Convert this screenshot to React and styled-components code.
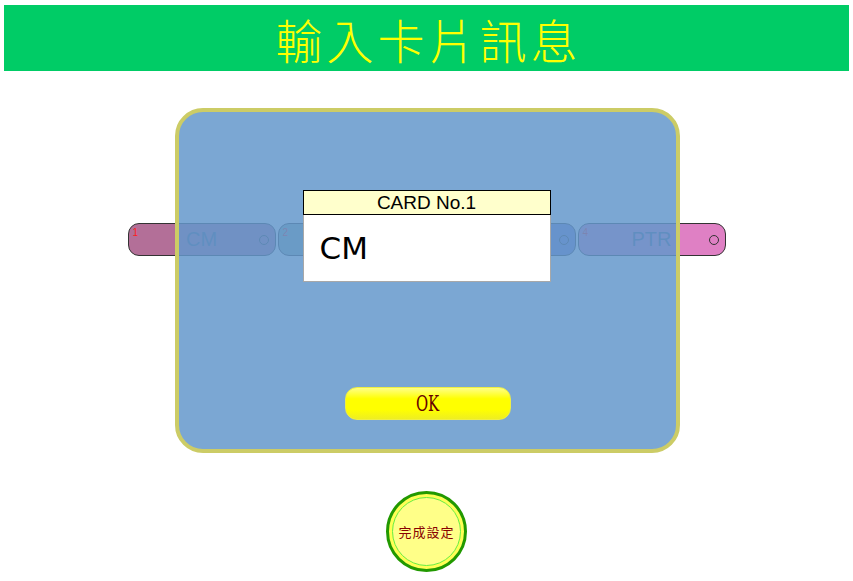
import React from "react";
import styled, { createGlobalStyle } from "styled-components";

const Global = createGlobalStyle`
  html, body { margin: 0; padding: 0; background: #ffffff; }
  body { font-family: "Liberation Sans", Arial, sans-serif; }
`;

const Page = styled.div`
  width: 853px;
  height: 581px;
  overflow: hidden;
  display: flex;
  flex-direction: column;
  align-items: center;
`;

const TitleBar = styled.header`
  margin: 5px 4px 0 4px;
  align-self: stretch;
  height: 66px;
  background: #00cc66;
  display: flex;
  align-items: center;
  justify-content: center;
  color: #ffff00;
  font-family: "Noto Sans CJK TC", "Noto Sans CJK SC", sans-serif;
  font-weight: 300;
  font-size: 47px;
  letter-spacing: 4px;
  line-height: 1;
  padding-left: 4px;
`;

const Stage = styled.div`
  position: relative;
  align-self: stretch;
  height: 420px;
  display: flex;
  flex-direction: column;
  align-items: center;
`;

const PillRow = styled.div`
  margin-top: 152px;
  display: flex;
  gap: 2px;
`;

const Pill = styled.div`
  position: relative;
  width: 146px;
  height: 31px;
  border: 1px solid #333;
  border-radius: 11px;
  background: ${(p) => p.$bg};
  display: flex;
  align-items: center;
  justify-content: center;
  box-sizing: content-box;
`;

const PillNum = styled.span`
  position: absolute;
  left: 4px;
  top: 3px;
  font-size: 10px;
  color: #ff2020;
  font-family: "Liberation Sans", sans-serif;
`;

const PillText = styled.span`
  font-size: 20px;
  color: #4a5a80;
  font-family: "Liberation Sans", Arial, sans-serif;
`;

const PillDot = styled.span`
  position: absolute;
  right: 6px;
  top: 11px;
  width: 8px;
  height: 8px;
  border: 1px solid #333;
  border-radius: 50%;
`;

const Modal = styled.div`
  position: absolute;
  top: 37px;
  left: 175px;
  width: 497px;
  height: 337px;
  border: 4px solid #cccc66;
  border-radius: 28px;
  background: rgba(100, 152, 203, 0.85);
  display: flex;
  flex-direction: column;
  align-items: center;
`;

const Card = styled.div`
  margin-top: 78px;
  width: 248px;
  margin-left: -2px;
  display: flex;
  flex-direction: column;
`;

const CardHead = styled.div`
  height: 23px;
  background: #ffffcc;
  border: 1px solid #000;
  display: flex;
  align-items: center;
  justify-content: center;
  font-size: 19px;
  color: #000;
  font-family: "Liberation Sans", Arial, sans-serif;
`;

const CardBody = styled.div`
  height: 66px;
  background: #ffffff;
  border: 1px solid #a8a8a8;
  border-top: none;
  display: flex;
  align-items: center;
  padding-left: 16px;
  font-size: 31px;
  color: #000;
  font-family: "DejaVu Sans", "Liberation Sans", sans-serif;
`;

const OkButton = styled.button`
  margin-top: 105px;
  width: 166px;
  height: 33px;
  border: 1px solid #eeee44;
  border-radius: 12px;
  background: linear-gradient(#ffff88 0%, #ffff00 35%, #ffff00 70%, #eeee22 100%);
  color: #660000;
  font-family: "DejaVu Serif Condensed", "Liberation Serif", serif;
  font-size: 22px;
  padding: 0;
  display: flex;
  align-items: center;
  justify-content: center;
`;

const OkLabel = styled.span`
  display: inline-block;
  transform: scaleX(0.75);
`;

const DoneButton = styled.button`
  width: 81px;
  height: 81px;
  border-radius: 50%;
  border: 3px solid #229900;
  background: #ffff55;
  padding: 3px;
  box-sizing: border-box;
  display: flex;
`;

const DoneInner = styled.span`
  flex: 1;
  border-radius: 50%;
  border: 1px solid #66ee44;
  background: #ffff88;
  display: flex;
  align-items: center;
  justify-content: center;
  color: #880000;
  font-family: "Noto Sans CJK TC", "Noto Sans CJK SC", sans-serif;
  font-size: 13px;
  letter-spacing: 1px;
  white-space: nowrap;
`;

const pills = [
  { n: 1, text: "CM", bg: "#b36f98" },
  { n: 2, text: "", bg: "#8cadaa" },
  { n: 3, text: "", bg: "#7a7ad0" },
  { n: 4, text: "PTR", bg: "#df80c4" },
];

export default function App() {
  return (
    <Page>
      <Global />
      <TitleBar>輸入卡片訊息</TitleBar>
      <Stage>
        <PillRow>
          {pills.map((p) => (
            <Pill key={p.n} $bg={p.bg}>
              <PillNum>{p.n}</PillNum>
              <PillText>{p.text}</PillText>
              <PillDot />
            </Pill>
          ))}
        </PillRow>
        <Modal>
          <Card>
            <CardHead>CARD No.1</CardHead>
            <CardBody>CM</CardBody>
          </Card>
          <OkButton>
            <OkLabel>OK</OkLabel>
          </OkButton>
        </Modal>
      </Stage>
      <DoneButton>
        <DoneInner>完成設定</DoneInner>
      </DoneButton>
    </Page>
  );
}
